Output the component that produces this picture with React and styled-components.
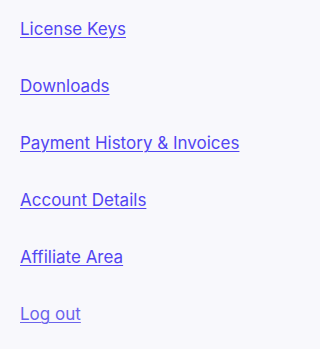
import React from 'react';
import styled, { createGlobalStyle } from 'styled-components';

const GlobalStyle = createGlobalStyle`
  html, body {
    margin: 0;
    padding: 0;
    background: #f8f8fc;
  }
`;

const Nav = styled.nav`
  display: flex;
  flex-direction: column;
  gap: 32px;
  padding: 17px 20px;
  font-family: Inter, "Liberation Sans", sans-serif;
`;

const NavLink = styled.a`
  font-size: 17px;
  line-height: 25px;
  color: ${p => (p.$muted ? '#6b63ec' : '#5245f2')};
  text-decoration: underline;
  text-underline-offset: 2px;
  text-decoration-thickness: 1px;
  align-self: flex-start;
`;

const links = [
  'License Keys',
  'Downloads',
  'Payment History & Invoices',
  'Account Details',
  'Affiliate Area',
];

export default function App() {
  return (
    <>
      <GlobalStyle />
      <Nav>
        {links.map(l => (
          <NavLink key={l} href="#">{l}</NavLink>
        ))}
        <NavLink href="#" $muted>Log out</NavLink>
      </Nav>
    </>
  );
}
